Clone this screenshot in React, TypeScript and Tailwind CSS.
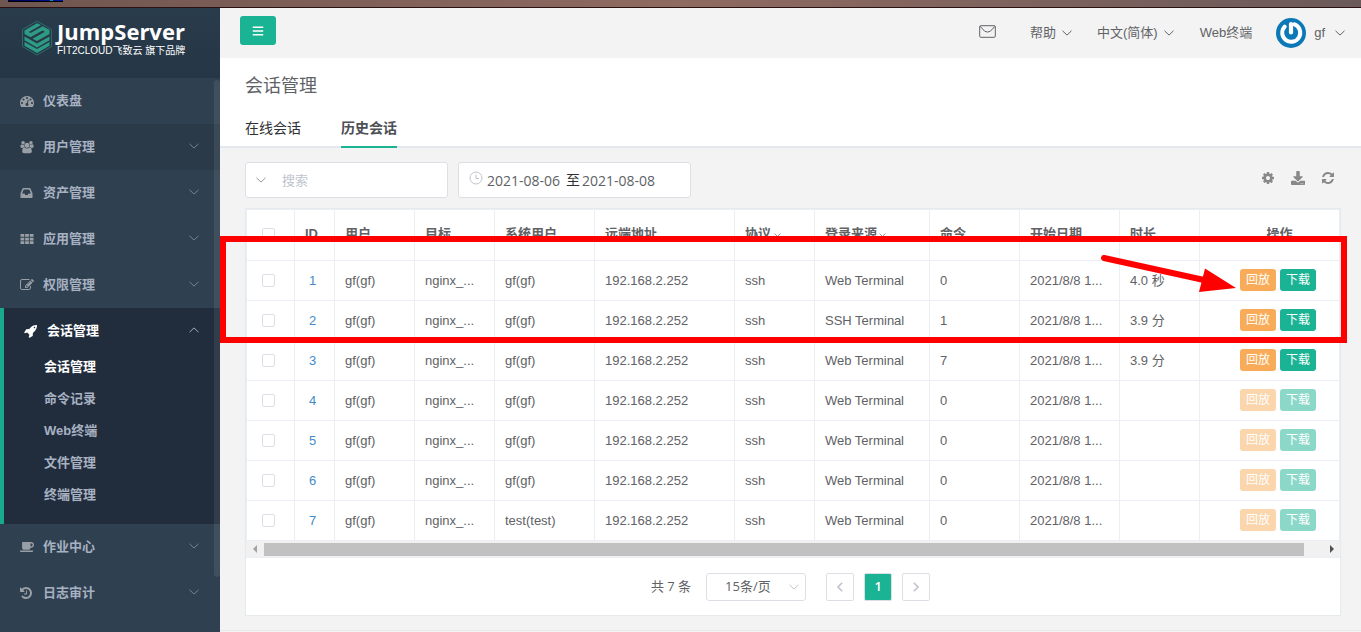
import React from 'react';
import { FaBars, FaCoffee, FaDownload } from 'react-icons/fa';

const iconPaths = {
  dashboard:
    'M384 1152q0-53-37.5-90.5t-90.5-37.5-90.5 37.5-37.5 90.5 37.5 90.5 90.5 37.5 90.5-37.5 37.5-90.5zm192-448q0-53-37.5-90.5t-90.5-37.5-90.5 37.5-37.5 90.5 37.5 90.5 90.5 37.5 90.5-37.5 37.5-90.5zm428 481l101-382q6-26-7.5-48.5t-38.5-29.5-48 6.5-30 39.5l-101 382q-60 5-107 43.5t-63 98.5q-20 77 20 146t117 89 146-20 89-117q16-60-6-117t-72-91zm660-33q0-53-37.5-90.5t-90.5-37.5-90.5 37.5-37.5 90.5 37.5 90.5 90.5 37.5 90.5-37.5 37.5-90.5zm-640-640q0-53-37.5-90.5t-90.5-37.5-90.5 37.5-37.5 90.5 37.5 90.5 90.5 37.5 90.5-37.5 37.5-90.5zm448 192q0-53-37.5-90.5t-90.5-37.5-90.5 37.5-37.5 90.5 37.5 90.5 90.5 37.5 90.5-37.5 37.5-90.5zm320 448q0 261-141 483-19 29-54 29h-1402q-35 0-54-29-141-221-141-483 0-182 71-348t191-286 286-191 348-71 348 71 286 191 191 286 71 348z',
  users:
    'M657 896q-162 5-265 128h-134q-82 0-138-40.5t-56-118.5q0-353 124-353 6 0 43.5 21t97.5 42.5 119 21.5q67 0 133-23-5 37-5 66 0 159 93 290zm1071 637q0 120-73 189.5t-194 69.5h-874q-121 0-194-69.5t-73-189.5q0-53 3.5-103.5t14-109 26.5-108.5 43-97.5 62-81 85.5-53.5 111.5-20q10 0 43 21.5t73 48 107 48 135 21.5 135-21.5 107-48 73-48 43-21.5q61 0 111.5 20t85.5 53.5 62 81 43 97.5 26.5 108.5 14 109 3.5 103.5zm-1024-1277q0 106-75 181t-181 75-181-75-75-181 75-181 181-75 181 75 75 181zm704 384q0 159-112.5 271.5t-271.5 112.5-271.5-112.5-112.5-271.5 112.5-271.5 271.5-112.5 271.5 112.5 112.5 271.5zm576 225q0 78-56 118.5t-138 40.5h-134q-103-123-265-128 93-131 93-290 0-29-5-66 66 23 133 23 59 0 119-21.5t97.5-42.5 43.5-21q124 0 124 353zm-128-609q0 106-75 181t-181 75-181-75-75-181 75-181 181-75 181 75 75 181z',
  inbox:
    'M1151 960h316q-1-3-2.5-8t-2.5-8l-212-496h-708l-212 496q-1 2-2.5 8t-2.5 8h316l95 192h320zm513 30v482q0 26-19 45t-45 19h-1408q-26 0-45-19t-19-45v-482q0-62 25-123l238-552q10-25 36.5-42t52.5-17h832q26 0 52.5 17t36.5 42l238 552q25 61 25 123z',
  grid: 'M0 256h480v352H0zM592 256h480v352H592zM1184 256h480v352h-480zM0 720h480v352H0zM592 720h480v352H592zM1184 720h480v352h-480zM0 1184h480v352H0zM592 1184h480v352H592zM1184 1184h480v352h-480z',
  edit: 'M888 1184l116-116-152-152-116 116v56h96v96h56zm440-720q-16-16-33 1l-350 350q-17 17-1 33t33-1l350-350q17-17 1-33zm80 594v190q0 119-84.5 203.5t-203.5 84.5h-832q-119 0-203.5-84.5t-84.5-203.5v-832q0-119 84.5-203.5t203.5-84.5h832q63 0 117 25 15 7 18 23 3 17-9 29l-49 49q-14 14-32 8-23-6-45-6h-832q-66 0-113 47t-47 113v832q0 66 47 113t113 47h832q66 0 113-47t47-113v-126q0-13 9-22l64-64q15-15 35-7t20 29zm-96-738l288 288-672 672h-288v-288zm444 132l-92 92-288-288 92-92q28-28 68-28t68 28l152 152q28 28 28 68t-28 68z',
  rocket:
    'M1440 448q0-40-28-68t-68-28-68 28-28 68 28 68 68 28 68-28 28-68zm224-288q0 249-75.5 430.5t-253.5 360.5q-81 80-195 176l-20 379q-2 16-16 26l-384 224q-7 4-16 4-12 0-23-9l-64-64q-13-14-8-32l85-276-281-281-276 85q-3 1-9 1-14 0-23-9l-64-64q-17-19-5-39l224-384q10-14 26-16l379-20q96-114 176-195 188-187 358-258t431-71q14 0 24 9.5t10 22.5z',
  history:
    'M1664 896q0 156-61 298t-164 245-245 164-298 61q-172 0-327-72.5t-264-204.5q-7-10-6.5-22.5t8.5-20.5l137-138q10-9 25-9 16 2 23 12 73 95 179 147t225 52q104 0 198.5-40.5t163.5-109.5 109.5-163.5 40.5-198.5-40.5-198.5-109.5-163.5-163.5-109.5-198.5-40.5q-98 0-188 35.5t-160 101.5l137 138q31 30 14 69-17 40-59 40h-448q-26 0-45-19t-19-45v-448q0-42 40-59 39-17 69 14l130 129q107-101 244.5-156.5t284.5-55.5q156 0 298 61t245 164 164 245 61 298zm-640-288v448q0 14-9 23t-23 9h-320q-14 0-23-9t-9-23v-64q0-14 9-23t23-9h224v-352q0-14 9-23t23-9h64q14 0 23 9t9 23z',
  refresh:
    'M1639 1056q0 5-1 7-64 268-268 434.5t-478 166.5q-146 0-282.5-55t-243.5-157l-129 129q-19 19-45 19t-45-19-19-45v-448q0-26 19-45t45-19h448q26 0 45 19t19 45-19 45l-137 137q71 66 161 102t187 36q134 0 250-65t186-179q11-17 53-117 8-23 30-23h192q13 0 22.5 9.5t9.5 22.5zm25-800v448q0 26-19 45t-45 19h-448q-26 0-45-19t-19-45 19-45l138-138q-148-137-349-137-134 0-250 65t-186 179q-11 17-53 117-8 23-30 23h-199q-13 0-22.5-9.5t-9.5-22.5v-7q65-268 270-434.5t480-166.5q146 0 284 55.5t245 156.5l130-129q19-19 45-19t45 19 19 45z',
  cog: 'M1152 896q0-106-75-181t-181-75-181 75-75 181 75 181 181 75 181-75 75-181zm512-109v222q0 12-8 23t-20 13l-185 28q-19 54-39 91 35 50 107 138 10 12 10 25t-9 23q-27 37-99 108t-94 71q-12 0-26-9l-138-108q-44 23-91 38-16 136-29 186-7 28-36 28h-222q-14 0-24.5-8.5t-11.5-21.5l-28-184q-49-16-90-37l-141 107q-10 9-25 9-14 0-25-11-126-114-165-168-7-10-7-23 0-12 8-23 15-21 51-66.5t54-70.5q-27-50-41-99l-183-27q-13-2-21-12.5t-8-23.5v-222q0-12 8-23t19-13l186-28q14-46 39-92-40-57-107-138-10-12-10-24 0-10 9-23 26-36 98.5-107.5t94.5-71.5q13 0 26 10l138 107q44-23 91-38 16-136 29-186 7-28 36-28h222q14 0 24.5 8.5t11.5 21.5l28 184q49 16 90 37l142-107q9-9 24-9 13 0 25 10 129 119 165 170 7 8 7 22 0 12-8 23-15 21-51 66.5t-54 70.5q26 50 41 98l183 28q13 2 21 12.5t8 23.5z',
};

type IconName = keyof typeof iconPaths;

const Icon = ({ name, box = '0 0 1792 1792', className }: { name: IconName; box?: string; className?: string }) => (
  <svg viewBox={box} className={className} fill="currentColor" aria-hidden="true">
    <path d={iconPaths[name]} />
  </svg>
);

const Chevron = ({ up = false, className = '' }: { up?: boolean; className?: string }) => (
  <svg viewBox="0 0 10 6" className={className} fill="none" stroke="currentColor" aria-hidden="true">
    <path d={up ? 'M.5 5.2L5 .9l4.5 4.3' : 'M.5.8L5 5.1 9.5.8'} />
  </svg>
);

const menuBefore: { label: string; icon: IconName; box?: string; arrow: boolean; dark?: boolean }[] = [
  { label: '仪表盘', icon: 'dashboard', arrow: false },
  { label: '用户管理', icon: 'users', box: '0 0 2048 1792', arrow: true, dark: true },
  { label: '资产管理', icon: 'inbox', box: '128 0 1664 1792', arrow: true },
  { label: '应用管理', icon: 'grid', box: '0 0 1664 1792', arrow: true },
  { label: '权限管理', icon: 'edit', arrow: true },
];

const subMenu = ['会话管理', '命令记录', 'Web终端', '文件管理', '终端管理'];

const sessions = [
  { id: 1, sysUser: 'gf(gf)', from: 'Web Terminal', commands: 0, duration: '4.0 秒', replay: true },
  { id: 2, sysUser: 'gf(gf)', from: 'SSH Terminal', commands: 1, duration: '3.9 分', replay: true },
  { id: 3, sysUser: 'gf(gf)', from: 'Web Terminal', commands: 7, duration: '3.9 分', replay: true },
  { id: 4, sysUser: 'gf(gf)', from: 'Web Terminal', commands: 0, duration: '', replay: false },
  { id: 5, sysUser: 'gf(gf)', from: 'Web Terminal', commands: 0, duration: '', replay: false },
  { id: 6, sysUser: 'gf(gf)', from: 'Web Terminal', commands: 0, duration: '', replay: false },
  { id: 7, sysUser: 'test(test)', from: 'Web Terminal', commands: 0, duration: '', replay: false },
];

const Logo = () => (
  <div className="flex h-[70px] items-start bg-linear-to-b from-[#293c4c] to-[#253646] pl-[21px]">
    <svg viewBox="0 0 32 36" className="mt-3 h-9 w-8 shrink-0" aria-hidden="true">
      <path d="M16 1l14.5 8.5v17L16 35 1.500 26.500v-17z" fill="none" stroke="#2b6b68" strokeWidth="1" />
      <path
        d="M20 5L16 3.200 3.500 10.500v3.500l6 3.200 12-6.700 2.500 1.300-12.500 7L16 21l12.500-7v-4l-6.800-3.700L9.500 13l-1.700-1L20 5z"
        fill="#2e9c85"
      />
      <path d="M3.500 16.500L16 23.500l12.500-7v3.800L16 27.500 3.500 20.300z" fill="#2e9c85" />
      <path d="M3.500 22L16 29l12.500-7v3.700L16 33 3.500 25.700z" fill="#2e9c85" />
    </svg>
    <div className="pt-[11px] pl-1 text-white">
      <div className="font-['Open_Sans',sans-serif] text-[22px] leading-6 font-bold">JumpServer</div>
      <div className="text-[10px] leading-4 font-normal whitespace-nowrap">FIT2CLOUD飞致云 旗下品牌</div>
    </div>
  </div>
);

const menuLink = 'flex h-[46px] items-center pl-5 pr-[21px]';
const menuArrow = 'mb-[2px] ml-auto h-[6px] w-[10px] opacity-60';

const Sidebar = () => (
  <aside className="relative w-[220px] shrink-0 bg-[#2f4050] text-[13px] font-bold text-[#a7b1c2]">
    <Logo />
    <nav>
      {menuBefore.map((item) => (
        <a key={item.label} href="#" className={`${menuLink} ${item.dark ? 'bg-[#2b3a49]' : ''}`}>
          <span className="w-[23px]">
            <Icon name={item.icon} box={item.box} className="h-[14px] w-[14px] text-[#9a9fa6]" />
          </span>
          {item.label}
          {item.arrow && <Chevron className={menuArrow} />}
        </a>
      ))}

      <div className="border-l-4 border-[#19aa8d] bg-[#212d3c] pb-4">
        <a href="#" className={`${menuLink} text-white`}>
          <span className="w-[23px]">
            <Icon name="rocket" className="h-[14px] w-[14px]" />
          </span>
          会话管理
          <Chevron up className={menuArrow} />
        </a>
        <div className="flex flex-col gap-[6px] pl-10">
          {subMenu.map((label, index) => (
            <a key={label} href="#" className={`leading-[26px] ${index === 0 ? 'text-white' : ''}`}>
              {label}
            </a>
          ))}
        </div>
      </div>

      <a href="#" className={menuLink}>
        <span className="w-[23px]">
          <FaCoffee className="h-[14px] w-[14px] text-[#9a9fa6]" />
        </span>
        作业中心
        <Chevron className={menuArrow} />
      </a>
      <a href="#" className={menuLink}>
        <span className="w-[23px]">
          <Icon name="history" box="128 0 1664 1792" className="h-[14px] w-[13px] text-[#9a9fa6]" />
        </span>
        日志审计
        <Chevron className={menuArrow} />
      </a>
    </nav>
    <div className="absolute top-[72px] right-0 h-[497px] w-[6px] rounded-full bg-white/8" />
  </aside>
);

const Header = () => (
  <header className="flex h-[50px] items-center bg-[#f3f3f3] pr-4 pl-5 text-[13px] text-[#606266]">
    <button
      type="button"
      aria-label="菜单"
      className="mb-[5px] flex h-[29px] w-9 items-center justify-center rounded-[3px] bg-[#1ab394] text-white"
    >
      <FaBars className="h-3 w-3" />
    </button>
    <div className="ml-auto flex items-center">
      <a href="#" aria-label="消息">
        <svg viewBox="0 0 17 13" className="mb-1 h-[13px] w-[17px]" fill="none" stroke="currentColor" aria-hidden="true">
          <rect x=".7" y=".7" width="15.600" height="11.600" rx="1" />
          <path d="M1 1.200l4.600 5Q8.500 8 11.400 6.200l4.600-5" />
        </svg>
      </a>
      <button type="button" className="ml-[34px] flex items-center gap-[6px]">
        帮助
        <Chevron className="h-[6px] w-[10px]" />
      </button>
      <button type="button" className="ml-[25px] flex items-center gap-[6px]">
        中文(简体)
        <Chevron className="h-[6px] w-[10px]" />
      </button>
      <a href="#" className="ml-[26px]">Web终端</a>
      <svg viewBox="0 0 30 30" className="ml-6 h-[30px] w-[30px]" aria-hidden="true">
        <circle cx="15" cy="15" r="15" fill="#0b78b8" />
        <path d="M18.500 6.400a9 9 0 1 1-9.800 2.200" fill="none" stroke="#fff" strokeWidth="4" strokeLinecap="round" />
        <path d="M15 6v8.500" stroke="#fff" strokeWidth="4.200" strokeLinecap="round" />
      </svg>
      <button type="button" className="ml-2 flex items-center gap-[10px]">
        gf
        <Chevron className="h-[6px] w-[10px]" />
      </button>
    </div>
  </header>
);

const Toolbar = () => (
  <div className="flex items-center gap-[10px]">
    <div className="flex h-9 w-[203px] items-center rounded-[3px] border border-[#dcdfe6] bg-white pl-[10px]">
      <Chevron className="h-[6px] w-[10px] shrink-0 text-[#8f949c]" />
      <input
        type="text"
        aria-label="搜索"
        placeholder="搜索"
        className="min-w-0 flex-1 bg-transparent pt-[2px] pl-4 text-[13px] outline-none placeholder:text-[#c0c4cc]"
      />
    </div>
    <div className="flex h-9 w-[233px] items-center rounded-[3px] border border-[#dcdfe6] bg-white pl-[10px] font-['Open_Sans','Noto_Sans_CJK_SC',sans-serif] text-sm">
      <svg viewBox="0 0 14 14" className="mr-1 mb-1 h-[14px] w-[14px] shrink-0" fill="none" stroke="#c0c4cc" aria-hidden="true">
        <circle cx="7" cy="7" r="6" />
        <path d="M7 3.500v4h3" />
      </svg>
      <input type="text" aria-label="开始日期" defaultValue="2021-08-06" className="w-[77px] bg-transparent pt-[2px] outline-none" />
      <span className="mx-[2px] text-[#303133]">至</span>
      <input type="text" aria-label="结束日期" defaultValue="2021-08-08" className="w-[77px] bg-transparent pt-[2px] outline-none" />
    </div>
    <div className="ml-auto flex items-center gap-4 pr-[5px] pb-1 text-[#888]">
      <button type="button" aria-label="设置">
        <Icon name="cog" className="h-[14px] w-[14px]" />
      </button>
      <button type="button" aria-label="导出">
        <FaDownload className="h-[14px] w-[14px]" />
      </button>
      <button type="button" aria-label="刷新">
        <Icon name="refresh" className="h-[14px] w-[14px]" />
      </button>
    </div>
  </div>
);

const Checkbox = ({ label }: { label: string }) => (
  <input
    type="checkbox"
    aria-label={label}
    className="block h-[13px] w-[13px] appearance-none rounded-xs border border-[#dcdfe6] bg-white"
  />
);

const th = 'border-r border-b border-[#ebeef5] px-[10px] pb-[2px] text-left font-bold whitespace-nowrap';
const td = 'truncate border-r border-b border-[#ebeef5] px-[10px]';

const SessionTable = () => (
  <table className="w-full table-fixed border-separate border-spacing-0 border-t border-l border-[#ebeef5]">
    <colgroup>
      <col className="w-[48px]" />
      <col className="w-[40px]" />
      <col className="w-[80px]" />
      <col className="w-[80px]" />
      <col className="w-[100px]" />
      <col className="w-[140px]" />
      <col className="w-[80px]" />
      <col className="w-[115px]" />
      <col className="w-[90px]" />
      <col className="w-[100px]" />
      <col className="w-[80px]" />
      <col />
    </colgroup>
    <thead>
      <tr className="h-[51px] text-[#606266]">
        <th className={`${th} pl-[15px]`}><Checkbox label="全选" /></th>
        <th className={`${th} text-center`}>ID</th>
        <th className={th}>用户</th>
        <th className={th}>目标</th>
        <th className={th}>系统用户</th>
        <th className={th}>远端地址</th>
        <th className={th}>
          协议<Chevron className="ml-[3px] inline h-1 w-[7px]" />
        </th>
        <th className={th}>
          登录来源<Chevron className="ml-[2px] inline h-1 w-[7px]" />
        </th>
        <th className={th}>命令</th>
        <th className={th}>开始日期</th>
        <th className={th}>时长</th>
        <th className="border-r border-b border-[#ebeef5] pb-[2px] pl-5 text-center font-bold">操作</th>
      </tr>
    </thead>
    <tbody>
      {sessions.map((row) => (
        <tr key={row.id} className="h-10">
          <td className={`${td} pl-[15px]`}><Checkbox label={`选择 ${row.id}`} /></td>
          <td className="border-r border-b border-[#ebeef5] pr-1 text-center">
            <a href="#" className="text-[#428bca]">{row.id}</a>
          </td>
          <td className={td}>gf(gf)</td>
          <td className={td}>nginx_...</td>
          <td className={td}>{row.sysUser}</td>
          <td className={td}>192.168.2.252</td>
          <td className={td}>ssh</td>
          <td className={td}>{row.from}</td>
          <td className={td}>{row.commands}</td>
          <td className={td}>2021/8/8 1...</td>
          <td className={td}>{row.duration}</td>
          <td className="border-r border-b border-[#ebeef5] pb-px pl-[17px]">
            <div className={`flex justify-center gap-1 text-xs text-white ${row.replay ? '' : 'opacity-50'}`}>
              <button type="button" disabled={!row.replay} className="h-[22px] w-9 rounded-[3px] bg-[#f8ac59]">回放</button>
              <button type="button" disabled={!row.replay} className="h-[22px] w-9 rounded-[3px] bg-[#1ab394]">下载</button>
            </div>
          </td>
        </tr>
      ))}
    </tbody>
  </table>
);

const Scrollbar = () => (
  <div className="flex h-[17px] items-center border-b border-[#ebeef5] bg-[#f1f1f1]">
    <svg viewBox="0 0 18 8" className="h-2 w-[18px]" aria-hidden="true">
      <path d="M11 0v8L7 4z" fill="#a3a3a3" />
    </svg>
    <div className="h-[13px] flex-1 bg-[#c1c1c1]" />
    <svg viewBox="0 0 36 8" className="h-2 w-9" aria-hidden="true">
      <path d="M26 0v8l4-4z" fill="#505050" />
    </svg>
  </div>
);

const pagerButton = 'flex h-7 w-7 items-center justify-center rounded-xs border border-[#dcdfe6]';

const Pagination = () => (
  <div className="flex h-[57px] items-center justify-center pr-[5px] font-['Open_Sans','Noto_Sans_CJK_SC',sans-serif] text-[13px]">
    <span className="mr-[15px]">共 7 条</span>
    <div className="relative">
      <select
        aria-label="每页条数"
        className="block h-7 w-[100px] appearance-none rounded-[3px] border border-[#dcdfe6] bg-white pl-[18px] outline-none"
      >
        <option>15条/页</option>
      </select>
      <Chevron className="pointer-events-none absolute top-[11px] right-[7px] h-[6px] w-[10px] text-[#c0c4cc]" />
    </div>
    <div className="ml-5 flex gap-[10px]">
      <button type="button" aria-label="上一页" className={`${pagerButton} text-[#c0c4cc]`}>
        <svg viewBox="0 0 6 10" className="h-[10px] w-[6px]" fill="none" stroke="currentColor" strokeWidth="1.600" aria-hidden="true">
          <path d="M5.200.8L1 5l4.200 4.200" />
        </svg>
      </button>
      <button type="button" className={`${pagerButton} bg-[#1ab394] font-semibold text-white`}>1</button>
      <button type="button" aria-label="下一页" className={`${pagerButton} text-[#c0c4cc]`}>
        <svg viewBox="0 0 6 10" className="h-[10px] w-[6px]" fill="none" stroke="currentColor" strokeWidth="1.600" aria-hidden="true">
          <path d="M.8.8L5 5 .8 9.200" />
        </svg>
      </button>
    </div>
  </div>
);

const App = () => {
  return (
    <div className="flex min-h-screen flex-col bg-[#f3f3f3] font-['Liberation_Sans','Noto_Sans_CJK_SC',sans-serif] text-[13px] text-[#606266]">
      <div className="h-2 border-b border-[#2a1212] bg-linear-to-r from-[#6f5650] via-[#8f6a60] to-[#6b5a5a] pl-2">
        <div className="flex h-[2px] w-[55px] justify-center border-b border-black bg-linear-to-r from-[#000050] to-[#0018a8] pl-8">
          <div className="w-[3px] bg-[#00a070]" />
        </div>
      </div>

      <div className="flex flex-1">
        <Sidebar />

        <main className="relative flex min-w-0 flex-1 flex-col">
          <Header />

          <div className="border-b-2 border-[#e4e7ed] bg-white pl-[25px]">
            <h1 className="pt-[15px] text-lg leading-[27px]">会话管理</h1>
            <div className="-mb-[2px] flex gap-10 pt-2 text-sm text-[#303133]">
              <a href="#" className="h-10 leading-10">在线会话</a>
              <a href="#" className="h-10 border-b-2 border-[#1ab394] leading-10 font-bold text-[#4c4f54]">历史会话</a>
            </div>
          </div>

          <div className="pt-[14px] pr-[21px] pb-[15px] pl-[25px]">
            <Toolbar />
            <div className="mt-[11px] ml-px bg-white shadow-[0_0_1px_1px_#e7eaec]">
              <SessionTable />
              <Scrollbar />
              <Pagination />
            </div>
          </div>
          <footer className="border-t border-[#e7eaec]" />

          {/* highlight box and arrow over the first two sessions */}
          <div className="pointer-events-none absolute top-[228px] right-[14px] left-0 h-[107px] border-[6px] border-[#ff0000]">
            <svg viewBox="0 0 140 44" className="absolute top-[8px] right-[105px] h-11 w-[140px]" aria-hidden="true">
              <path d="M8 8l100 22" stroke="#ff0000" strokeWidth="6" strokeLinecap="round" />
              <path d="M109 18.500l31 19.500-37 4z" fill="#ff0000" />
            </svg>
          </div>
        </main>
      </div>
    </div>
  );
};

export default App;
